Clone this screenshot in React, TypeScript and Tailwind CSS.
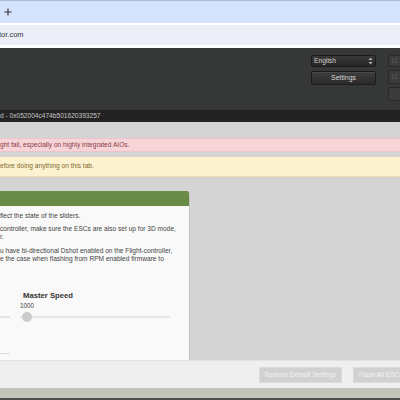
import React from 'react';

function HeaderButton({ children, dim }: { children?: React.ReactNode; dim?: boolean }) {
  return (
    <div
      className={`h-[14px] w-[65px] rounded-[2px] border border-[#1b1b1b] bg-gradient-to-b from-[#3d3d3d] to-[#2b2b2b] shadow-[inset_0_1px_0_#4a4a4a] flex items-center justify-center text-[6.9px] ${dim ? 'text-[#6a6a6a]' : 'text-[#d6d6d6]'}`}
    >
      {children}
    </div>
  );
}

export default function App() {
  return (
    <div className="w-[400px] h-[400px] overflow-hidden flex flex-col font-['Liberation_Sans',Arial,sans-serif] bg-[#d4d4d4]">
      {/* browser tab strip */}
      <div className="h-[23px] shrink-0 bg-[#d3e3fd] border-t border-[#a9b9d3] flex items-center pl-[4px]">
        <svg width="8" height="8" viewBox="0 0 8 8" className="text-[#333]">
          <path d="M4 0.5v7M0.5 4h7" stroke="currentColor" strokeWidth="1.1" />
        </svg>
      </div>

      {/* address bar */}
      <div className="h-[25px] shrink-0 border-t-[2px] border-b-[3px] border-white bg-[#eceff7] flex items-center">
        <span className="text-[7.5px] text-[#333] -ml-[1px]">tor.com</span>
      </div>

      {/* app header */}
      <div className="h-[62px] shrink-0 bg-[#363837] flex gap-[12px] pl-[311px] pt-[7px]">
        <div className="flex flex-col gap-[4px] shrink-0">
          <div className="h-[12px] w-[65px] rounded-[2px] border border-[#1b1b1b] bg-gradient-to-b from-[#3a3a3a] to-[#262626] flex items-center justify-between px-[2px] text-[6.7px] text-[#cfcfcf]">
            <span>English</span>
            <svg width="5" height="8" viewBox="0 0 5 8" className="text-[#bbb]">
              <path d="M0.5 3L2.5 0.8L4.5 3Z M0.5 5L2.5 7.2L4.5 5Z" fill="currentColor" />
            </svg>
          </div>
          <HeaderButton>Settings</HeaderButton>
        </div>
        <div className="flex flex-col gap-[3px] shrink-0">
          <div className="h-[12px] w-[40px] rounded-[2px] border border-[#2a2a2a] bg-[#3a3b3a] text-[6.5px] text-[#5f5f5f] flex items-center pl-[2px]">
            11
          </div>
          <div className="h-[14px] w-[40px] rounded-[2px] border border-[#2a2a2a] bg-[#3a3b3a] text-[6.5px] text-[#5f5f5f] flex items-center pl-[2px]">
            11
          </div>
          <div className="h-[14px] w-[40px] rounded-[2px] border border-[#2a2a2a] bg-[#3a3b3a]" />
        </div>
      </div>

      {/* status line */}
      <div className="h-[12px] shrink-0 bg-[#232323] flex items-center">
        <span className="text-[6.6px] text-[#c8c8c8] whitespace-nowrap">d - 0x052004c474b501620393257</span>
      </div>

      {/* tab content */}
      <div className="flex-1 min-h-0 flex flex-col pt-[16px]">
        <div className="h-[14px] shrink-0 bg-[#f6d4d8] border-y border-[#edc4c9] flex items-center">
          <span className="text-[6.6px] text-[#8a3b44] whitespace-nowrap">ght fail, especially on highly integrated AIOs.</span>
        </div>
        <div className="h-[20px] mt-[5px] shrink-0 bg-[#fdf2cf] border-b border-[#ece0b2] flex items-start pt-[4px]">
          <span className="text-[6.6px] text-[#7d6a33] whitespace-nowrap">efore doing anything on this tab.</span>
        </div>

        <div className="flex-1 min-h-0 mt-[14px] w-[190px] flex flex-col bg-[#f9f9f9] border-r border-[#c4c4c4] rounded-tr-[3px] overflow-hidden">
          <div className="h-[15px] shrink-0 bg-[#6a8a47]" />
          <div className="flex flex-col text-[6.6px] leading-[8.5px] text-[#444] pt-[6px]">
            <p className="whitespace-nowrap">flect the state of the sliders.</p>
            <p className="mt-[4px] whitespace-nowrap">
              controller, make sure the ESCs are also set up for 3D mode,
              <br />
              r.
            </p>
            <p className="mt-[5px] whitespace-nowrap">
              u have bi-directional Dshot enabled on the Flight-controller,
              <br />
              e the case when flashing from RPM enabled firmware to
            </p>
          </div>

          <div className="flex items-start mt-[27px]">
            <div className="w-[10px] shrink-0 pt-[25px]">
              <div className="h-[2px] bg-[#e4e4e4]" />
            </div>
            <div className="ml-[10px] flex flex-col w-[150px]">
              <span className="ml-[3px] text-[7.7px] font-bold text-[#333] leading-[9px]">Master Speed</span>
              <span className="text-[6.3px] text-[#444] leading-[7px] mt-[2px]">1000</span>
              <div className="relative h-[10px] mt-[3px] flex items-center">
                <div className="h-[2px] w-full bg-[#e6e6e6]" />
                <div className="absolute left-[2px] top-0 w-[10px] h-[10px] rounded-full bg-[#cbcbcb]" />
              </div>
            </div>
          </div>

          <div className="w-[10px] h-[1px] bg-[#dcdcdc] mt-[31px]" />
        </div>
      </div>

      {/* footer toolbar */}
      <div className="h-[28px] shrink-0 bg-[#efefef] border-t border-[#e2e2e2] flex items-center pl-[259px] gap-[11px]">
        <div className="h-[16px] w-[83px] shrink-0 bg-[#d1d1d1] border border-[#dcdcdc] flex items-center justify-center text-[6.6px] text-[#f3f3f3] whitespace-nowrap">
          Restore Default Settings
        </div>
        <div className="h-[16px] w-[60px] shrink-0 bg-[#d1d1d1] border border-[#dcdcdc] flex items-center pl-[5px] text-[6.6px] text-[#f3f3f3] whitespace-nowrap">
          Flash All ESCs
        </div>
      </div>

      <div className="h-[10px] shrink-0 bg-[#c3c3bb]" />
      <div className="h-[2px] shrink-0 bg-[#4d4d4d]" />
    </div>
  );
}
